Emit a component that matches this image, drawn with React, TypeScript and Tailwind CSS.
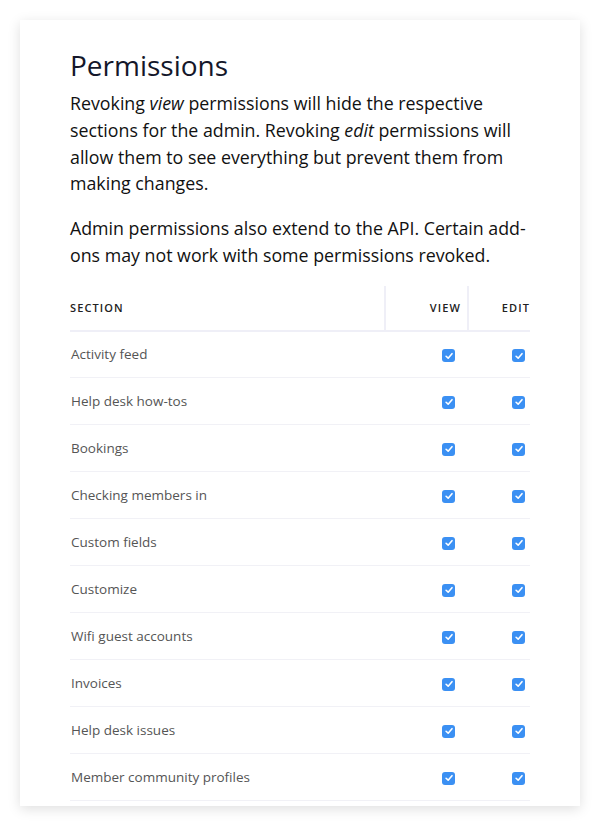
const ROWS = [
  "Activity feed",
  "Help desk how-tos",
  "Bookings",
  "Checking members in",
  "Custom fields",
  "Customize",
  "Wifi guest accounts",
  "Invoices",
  "Help desk issues",
  "Member community profiles",
];

function Check() {
  return (
    <span className="inline-flex h-[13px] w-[13px] items-center justify-center rounded-[3px] bg-[#3b90f3]">
      <svg viewBox="0 0 12 12" className="h-[10px] w-[10px]">
        <path
          d="M2.5 6.3 L5 8.6 L9.6 3.2"
          fill="none"
          stroke="white"
          strokeWidth="1.9"
          strokeLinecap="round"
          strokeLinejoin="round"
        />
      </svg>
    </span>
  );
}

export default function App() {
  return (
    <div className="bg-white p-[20px] pb-[21px] font-['Open_Sans',sans-serif]">
      <div className="bg-white px-[50px] pt-[26px] pb-[5px] shadow-[0_3px_12px_rgba(0,0,0,0.13)]">
        <h1 className="text-[28px] leading-[38px] text-[#14172a]">Permissions</h1>
        <p className="mt-[6px] text-[17.8px] leading-[26.8px] text-[#111]">
          Revoking <em>view</em> permissions will hide the respective sections for
          the admin. Revoking <em>edit</em> permissions will allow them to see
          everything but prevent them from making changes.
        </p>
        <p className="mt-[18px] text-[17.8px] leading-[26.8px] text-[#111]">
          Admin permissions also extend to the API. Certain add-ons may not work
          with some permissions revoked.
        </p>
        <table className="mt-[17px] w-full border-collapse">
          <thead>
            <tr className="border-b-2 border-[#efeff7]">
              <th className="h-[45px] text-left text-[11px] font-semibold tracking-[0.1em] text-[#222]">
                SECTION
              </th>
              <th className="w-[83px] border-l-2 border-[#efeff7] pr-[6px] text-right text-[11px] font-semibold tracking-[0.1em] text-[#222]">
                VIEW
              </th>
              <th className="w-[62px] border-l-2 border-[#efeff7] text-right text-[11px] font-semibold tracking-[0.1em] text-[#222]">
                EDIT
              </th>
            </tr>
          </thead>
          <tbody>
            {ROWS.map((name) => (
              <tr key={name} className="border-b border-[#f1f1f6]">
                <td className="h-[47px] pl-[1px] text-[13.5px] text-[#555]">{name}</td>
                <td className="pr-[13px] text-right align-middle">
                  <span className="inline-flex pt-[2px]">
                    <Check />
                  </span>
                </td>
                <td className="pr-[5px] text-right align-middle">
                  <span className="inline-flex pt-[2px]">
                    <Check />
                  </span>
                </td>
              </tr>
            ))}
          </tbody>
        </table>
      </div>
    </div>
  );
}
